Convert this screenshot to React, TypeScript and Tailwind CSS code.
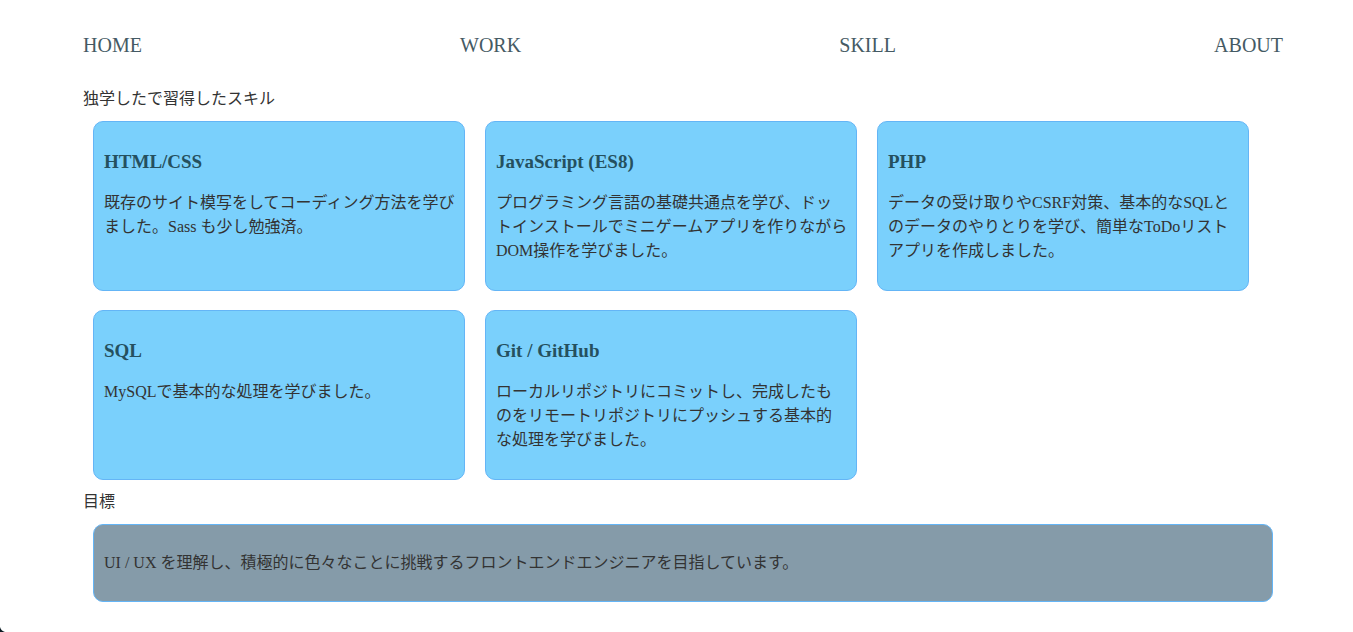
const nav = ["HOME", "WORK", "SKILL", "ABOUT"];

const skills = [
  { title: "HTML/CSS", text: "既存のサイト模写をしてコーディング方法を学びました。Sass も少し勉強済。" },
  { title: "JavaScript (ES8)", text: "プログラミング言語の基礎共通点を学び、ドッ\nトインストールでミニゲームアプリを作りながらDOM操作を学びました。" },
  { title: "PHP", text: "データの受け取りやCSRF対策、基本的なSQLとのデータのやりとりを学び、簡単なToDoリストアプリを作成しました。" },
  { title: "SQL", text: "MySQLで基本的な処理を学びました。" },
  { title: "Git / GitHub", text: "ローカルリポジトリにコミットし、完成したも\nのをリモートリポジトリにプッシュする基本的\nな処理を学びました。" },
];

export default function App() {
  return (
    <div lang="ja" className="relative min-h-screen bg-white pt-[31px] pr-[70px] pb-[30px] pl-[83px] font-['Liberation_Serif','Noto_Sans_CJK_JP',serif] text-base leading-6 text-[#333]">
      <nav>
        <ul className="flex justify-between text-xl leading-7 text-[#455a64]">
          {nav.map((label) => (
            <li key={label}>
              <a href="#">{label}</a>
            </li>
          ))}
        </ul>
      </nav>
      <main className="pt-7">
        <section>
          <h2>独学したで習得したスキル</h2>
          <div className="flex flex-wrap gap-x-5 gap-y-[19px] p-[10px]">
            {skills.map((skill) => (
              <article key={skill.title} className="min-h-[170px] w-[372px] max-w-full rounded-[10px] border border-[#64b5f6] bg-[#7ad0fc] pt-[26px] pr-2 pb-6 pl-[10px]">
                <h3 className="text-[19px] leading-7 font-bold text-[#25505f]">{skill.title}</h3>
                <p className="mt-[15px] whitespace-pre-line">{skill.text}</p>
              </article>
            ))}
          </div>
        </section>
        <section>
          <h2>目標</h2>
          <div className="mx-[10px] mt-[10px] rounded-[10px] border border-[#64b5f6] bg-[#859ba9] px-[10px] py-[26px]">
            <p>UI / UX を理解し、積極的に色々なことに挑戦するフロントエンドエンジニアを目指しています。</p>
          </div>
        </section>
      </main>
      <svg aria-hidden="true" viewBox="0 0 5 5" className="absolute bottom-0 left-0 size-[5px] fill-[#0b1a22]">
        <path d="M0 0Q1 4 5 5H0Z" />
      </svg>
    </div>
  );
}
